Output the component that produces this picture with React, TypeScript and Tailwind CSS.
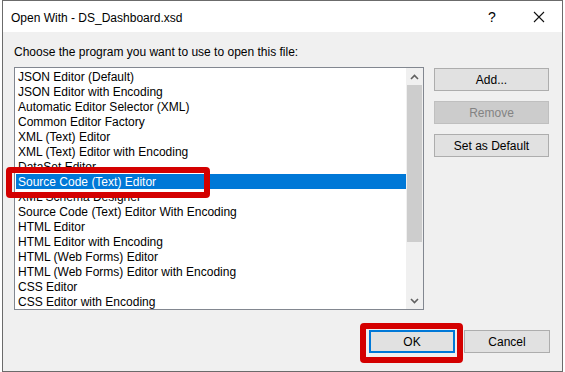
import React from 'react';

const programs = [
  'JSON Editor (Default)',
  'JSON Editor with Encoding',
  'Automatic Editor Selector (XML)',
  'Common Editor Factory',
  'XML (Text) Editor',
  'XML (Text) Editor with Encoding',
  'DataSet Editor',
  'Source Code (Text) Editor',
  'XML Schema Designer',
  'Source Code (Text) Editor With Encoding',
  'HTML Editor',
  'HTML Editor with Encoding',
  'HTML (Web Forms) Editor',
  'HTML (Web Forms) Editor with Encoding',
  'CSS Editor',
  'CSS Editor with Encoding',
];

const selected = 7;

const font = { fontFamily: '"Segoe UI", "Liberation Sans", Arial, sans-serif' };

function Chevron({ up }: { up?: boolean }) {
  return (
    <svg width="9" height="6" viewBox="0 0 9 6">
      <path
        d={up ? 'M1 5 L4.5 1.5 L8 5' : 'M1 1 L4.5 4.5 L8 1'}
        fill="none"
        stroke="#606060"
        strokeWidth="1.6"
      />
    </svg>
  );
}

export default function App() {
  return (
    <div className="w-[565px] h-[372px] bg-white pl-[2px] pr-[2px] text-[12px] text-black" style={font}>
      <div className="relative w-[561px] h-[372px] border border-[#6b6b6b] bg-[#f0f0f0] flex flex-col">
        {/* title bar */}
        <div className="h-[31px] bg-white flex items-center pl-[8px] shrink-0">
          <span className="flex-1 leading-[16px] pt-[2px]">Open With - DS_Dashboard.xsd</span>
          <span className="w-[20px] text-center text-[14px] mr-[31px] pt-[2px]">?</span>
          <svg width="12" height="12" viewBox="0 0 12 12" className="mr-[17px]">
            <path d="M1 1 L11 11 M11 1 L1 11" stroke="#111" strokeWidth="1.1" />
          </svg>
        </div>

        <div className="flex flex-col pl-[11px] pr-[12px] pt-[12px]">
          <div className="leading-[16px]">Choose the program you want to use to open this file:</div>

          <div className="flex mt-[7px] gap-[10px]">
            {/* list box */}
            <div className="w-[410px] h-[243px] border border-[#828790] bg-white flex">
              <div className="flex-1 pt-[1px] pl-[1px]">
                {programs.map((p, i) => (
                  <div
                    key={p}
                    className={
                      'h-[15px] leading-[16px] pl-[2px] whitespace-nowrap overflow-hidden ' +
                      (i === selected ? 'bg-[#0078d7] text-white' : '')
                    }
                  >
                    {p}
                  </div>
                ))}
              </div>
              <div className="w-[17px] bg-[#f0f0f0] flex flex-col">
                <div className="h-[17px] flex items-center justify-center">
                  <Chevron up />
                </div>
                <div className="h-[157px] mx-[1px] bg-[#cdcdcd]" />
                <div className="flex-1" />
                <div className="h-[17px] flex items-center justify-center">
                  <Chevron />
                </div>
              </div>
            </div>

            {/* side buttons */}
            <div className="flex flex-col gap-[10px] pt-[1px]">
              <button className="w-[115px] h-[23px] border border-[#adadad] bg-[#e1e1e1] pt-[1px]">Add...</button>
              <button className="w-[115px] h-[23px] border border-[#bfbfbf] bg-[#cccccc] text-[#838383] pt-[1px]">
                Remove
              </button>
              <button className="w-[115px] h-[23px] border border-[#adadad] bg-[#e1e1e1] pt-[1px]">
                Set as Default
              </button>
            </div>
          </div>

          <div className="flex justify-end gap-[9px] mt-[20px]">
            <button className="w-[86px] h-[23px] border-2 border-[#0078d7] bg-[#e1e1e1] pt-[1px]">OK</button>
            <button className="w-[86px] h-[23px] border border-[#adadad] bg-[#e1e1e1] pt-[1px]">Cancel</button>
          </div>
        </div>

        {/* red highlight overlays */}
        <div className="absolute left-[3px] top-[166px] w-[204px] h-[31px] border-[6px] border-[#d40000] rounded-[4px]" />
        <div className="absolute left-[357px] top-[322px] w-[103px] h-[40px] border-[6px] border-[#d40000] rounded-[4px]" />
      </div>
    </div>
  );
}
